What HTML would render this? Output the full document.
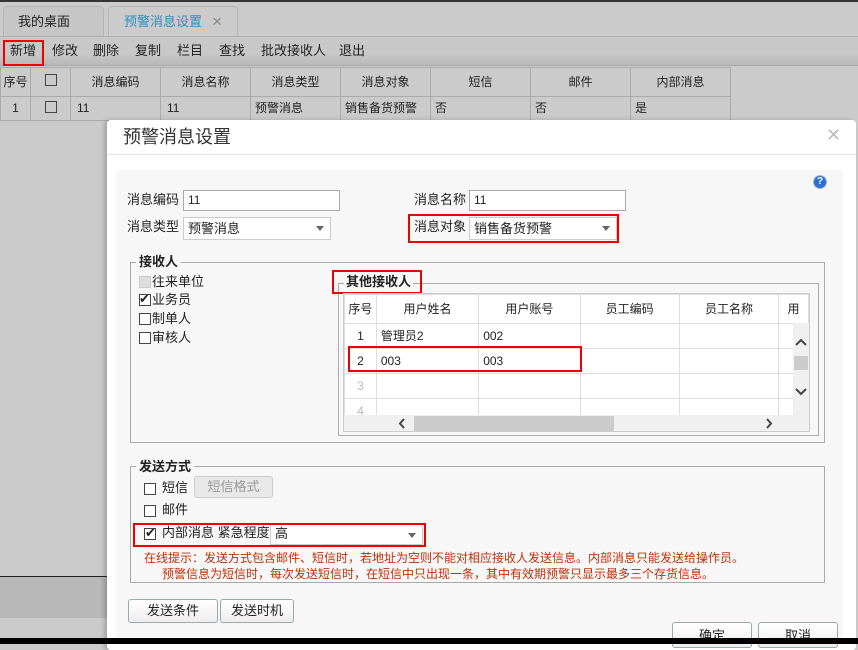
<!DOCTYPE html>
<html><head><meta charset="utf-8"><style>
*{box-sizing:border-box;margin:0;padding:0}
body{width:858px;height:644px;overflow:hidden;background:#cbcbcb;font-family:"Liberation Sans","Noto Sans CJK SC",sans-serif;font-size:12px;color:#222;position:relative;line-height:1.2}
.a{position:absolute}
.inp{position:absolute;background:#fff;border:1px solid #aaa;padding-left:4px;line-height:18px;font-size:12px}
.arr{position:absolute;right:6px;top:8px;border-left:4px solid transparent;border-right:4px solid transparent;border-top:5px solid #666}
.cb{position:absolute;width:12px;height:12px;border:1px solid #444;background:#fff}
.red{position:absolute;border:2px solid #e00}
.btn{position:absolute;border:1px solid #9aa;border-radius:3px;background:linear-gradient(#fff,#eee);text-align:center;font-size:13px}
.g td{border:1px solid #ddd;height:25px;padding-left:4px}
</style></head><body>
<div class="a" style="left:0;top:0;width:858px;height:2px;background:#333"></div>
<div class="a" style="left:3px;top:6px;width:101px;height:30px;border:1px solid #b5b5b5;border-bottom:none;border-radius:4px 4px 0 0;background:#c6c6c6;font-size:13px;line-height:30px;padding-left:14px">我的桌面</div>
<div class="a" style="left:108px;top:6px;width:130px;height:31px;border:1px solid #b5b5b5;border-bottom:none;border-radius:4px 4px 0 0;background:#cbcbcb;font-size:13px;line-height:30px;padding-left:15px;color:#2a8fc0">预警消息设置 <span style="color:#888;margin-left:6px">✕</span></div>
<div class="a" style="left:0;top:36px;width:858px;height:30px;border-top:1px solid #b0b0b0;background:linear-gradient(#c8c8c8 0,#c8c8c8 60%,#b8b8b8 100%);border-bottom:1px solid #a8a8a8"></div>
<div class="a" style="left:10px;top:43px;font-size:13px">新增</div>
<div class="a" style="left:52px;top:43px;font-size:13px">修改</div>
<div class="a" style="left:93px;top:43px;font-size:13px">删除</div>
<div class="a" style="left:135px;top:43px;font-size:13px">复制</div>
<div class="a" style="left:177px;top:43px;font-size:13px">栏目</div>
<div class="a" style="left:219px;top:43px;font-size:13px">查找</div>
<div class="a" style="left:261px;top:43px;font-size:13px">批改接收人</div>
<div class="a" style="left:339px;top:43px;font-size:13px">退出</div>
<div class="red" style="left:3px;top:40px;width:41px;height:26px"></div>
<table class="a" style="left:0;top:67px;border-collapse:collapse;font-size:12px">
<tr style="height:29px;text-align:center">
<td style="width:30px;border:1px solid #aaa">序号</td><td style="width:40px;border:1px solid #aaa"><span style="display:inline-block;width:12px;height:12px;border:1px solid #444"></span></td>
<td style="width:90px;border:1px solid #aaa">消息编码</td><td style="width:90px;border:1px solid #aaa">消息名称</td><td style="width:90px;border:1px solid #aaa">消息类型</td><td style="width:90px;border:1px solid #aaa">消息对象</td><td style="width:100px;border:1px solid #aaa">短信</td><td style="width:100px;border:1px solid #aaa">邮件</td><td style="width:100px;border:1px solid #aaa">内部消息</td></tr>
<tr style="height:24px">
<td style="border:1px solid #aaa;text-align:center">1</td><td style="border:1px solid #aaa;text-align:center"><span style="display:inline-block;width:12px;height:12px;border:1px solid #444"></span></td>
<td style="border:1px solid #aaa;padding-left:6px">11</td><td style="border:1px solid #aaa;padding-left:6px">11</td><td style="border:1px solid #aaa;padding-left:4px">预警消息</td><td style="border:1px solid #aaa;padding-left:4px">销售备货预警</td><td style="border:1px solid #aaa;padding-left:4px">否</td><td style="border:1px solid #aaa;padding-left:4px">否</td><td style="border:1px solid #aaa;padding-left:4px">是</td></tr></table>
<div class="a" style="left:0;top:576px;width:110px;height:1px;background:#222"></div>
<div class="a" style="left:0;top:577px;width:110px;height:41px;background:#b8b8b8"></div>
<div class="a" style="left:107px;top:120px;width:749px;height:530px;background:#fff;border-radius:4px;box-shadow:-3px 0 5px rgba(0,0,0,.2)"></div>
<div class="a" style="left:123px;top:127px;font-size:18px;color:#333">预警消息设置</div>
<div class="a" style="left:826px;top:125px;font-size:18px;color:#bbb">✕</div>
<div class="a" style="left:107px;top:154px;width:749px;height:1px;background:#e3e3e3"></div>
<div class="a" style="left:116px;top:170px;width:727px;height:470px;background:#f7f7f7"></div>
<div class="a" style="left:813px;top:175px;width:14px;height:14px;border-radius:50%;background:#2c6fd1;border:1px solid #9bd;color:#fff;font-size:10px;font-weight:bold;text-align:center;line-height:12px">?</div>
<div class="a" style="left:127px;top:192px;font-size:13px">消息编码</div>
<div class="inp" style="left:183px;top:190px;width:157px;height:21px">11</div>
<div class="a" style="left:414px;top:192px;font-size:13px">消息名称</div>
<div class="inp" style="left:469px;top:190px;width:157px;height:21px">11</div>
<div class="a" style="left:127px;top:219px;font-size:13px">消息类型</div>
<div class="inp" style="left:183px;top:217px;width:148px;height:23px;border-color:#ccc;line-height:21px;font-size:13px">预警消息<i class="arr"></i></div>
<div class="a" style="left:414px;top:219px;font-size:13px">消息对象</div>
<div class="inp" style="left:469px;top:217px;width:148px;height:23px;border-color:#ccc;line-height:21px;font-size:13px">销售备货预警<i class="arr"></i></div>
<div class="red" style="left:408px;top:214px;width:211px;height:29px"></div>
<div class="a" style="left:130px;top:262px;width:695px;height:181px;border:1px solid #aaa"></div>
<div class="a" style="left:136px;top:254px;background:#f7f7f7;padding:0 3px;font-weight:bold;font-size:13px">接收人</div>
<div class="cb" style="left:139px;top:276px;background:#ddd;border-color:#ccc"></div><div class="a" style="left:152px;top:274px;font-size:13px">往来单位</div>
<div class="cb" style="left:139px;top:294px"></div><div class="a" style="left:139px;top:292px;font-size:13px;line-height:14px">✔</div><div class="a" style="left:152px;top:292px;font-size:13px">业务员</div>
<div class="cb" style="left:139px;top:313px"></div><div class="a" style="left:152px;top:311px;font-size:13px">制单人</div>
<div class="cb" style="left:139px;top:332px"></div><div class="a" style="left:152px;top:330px;font-size:13px">审核人</div>
<div class="a" style="left:338px;top:283px;width:481px;height:153px;border:1px solid #aaa"></div>
<div class="a" style="left:344px;top:274px;background:#f7f7f7;padding:0 2px;font-weight:bold;font-size:13px">其他接收人</div>
<div class="red" style="left:332px;top:270px;width:90px;height:24px"></div>
<div class="a" style="left:343px;top:293px;width:467px;height:139px;background:#fff;border:1px solid #ccc;overflow:hidden">
<table class="g" style="border-collapse:collapse;font-size:12px">
<tr style="text-align:center;height:29px"><td style="width:32px;height:29px;padding:0">序号</td><td style="width:103px;padding:0">用户姓名</td><td style="width:102px;padding:0">用户账号</td><td style="width:100px;padding:0">员工编码</td><td style="width:100px;padding:0">员工名称</td><td style="width:30px;padding:0">用</td></tr>
<tr><td style="text-align:center;padding:0">1</td><td>管理员2</td><td>002</td><td></td><td></td><td></td></tr>
<tr><td style="text-align:center;padding:0">2</td><td>003</td><td>003</td><td></td><td></td><td></td></tr>
<tr><td style="text-align:center;padding:0;color:#bbb">3</td><td></td><td></td><td></td><td></td><td></td></tr>
<tr><td style="text-align:center;padding:0;color:#bbb">4</td><td></td><td></td><td></td><td></td><td></td></tr>
</table>
<div class="a" style="left:449px;top:29px;width:17px;height:93px;background:#f0f0f0"></div>
<svg class="a" style="left:451px;top:44px" width="12" height="8"><path d="M1 7L6 2L11 7" stroke="#444" stroke-width="2" fill="none"/></svg>
<div class="a" style="left:450px;top:62px;width:14px;height:14px;background:#ccc"></div>
<svg class="a" style="left:451px;top:94px" width="12" height="8"><path d="M1 1L6 6L11 1" stroke="#444" stroke-width="2" fill="none"/></svg>
<div class="a" style="left:0;top:121px;width:466px;height:17px;background:#f0f0f0"></div>
<div class="a" style="left:70px;top:122px;width:200px;height:15px;background:#ccc"></div>
<svg class="a" style="left:54px;top:124px" width="8" height="11"><path d="M6 1L2 5.5L6 10" stroke="#444" stroke-width="2" fill="none"/></svg>
<svg class="a" style="left:421px;top:124px" width="8" height="11"><path d="M2 1L6 5.5L2 10" stroke="#444" stroke-width="2" fill="none"/></svg>
</div>
<div class="red" style="left:348px;top:346px;width:234px;height:26px"></div>
<div class="a" style="left:130px;top:466px;width:695px;height:117px;border:1px solid #aaa"></div>
<div class="a" style="left:136px;top:459px;background:#f7f7f7;padding:0 3px;font-weight:bold;font-size:13px">发送方式</div>
<div class="cb" style="left:144px;top:483px"></div><div class="a" style="left:162px;top:480px;font-size:13px">短信</div>
<div class="a" style="left:194px;top:476px;width:79px;height:22px;border:1px solid #ccc;border-radius:3px;background:#e8e8e8;color:#999;text-align:center;line-height:20px;font-size:13px">短信格式</div>
<div class="cb" style="left:144px;top:505px"></div><div class="a" style="left:162px;top:502px;font-size:13px">邮件</div>
<div class="cb" style="left:144px;top:528px"></div><div class="a" style="left:145px;top:526px;font-size:13px;line-height:13px">✔</div>
<div class="a" style="left:162px;top:525px;font-size:13px">内部消息&nbsp;紧急程度</div>
<div class="inp" style="left:270px;top:524px;width:153px;height:21px;border-color:#ccc;font-size:13px">高<i class="arr"></i></div>
<div class="red" style="left:133px;top:523px;width:293px;height:24px"></div>
<div class="a" style="left:144px;top:550px;color:#c0300a;font-size:12px;line-height:16px">在线提示：发送方式包含邮件、短信时，若地址为空则不能对相应接收人发送信息。内部消息只能发送给操作员。<br><span style="padding-left:18px">预警信息为短信时，每次发送短信时，在短信中只出现一条，其中有效期预警只显示最多三个存货信息。</span></div>
<div class="btn" style="left:128px;top:599px;width:90px;height:24px;line-height:22px">发送条件</div>
<div class="btn" style="left:220px;top:599px;width:74px;height:24px;line-height:22px">发送时机</div>
<div class="btn" style="left:672px;top:622px;width:80px;height:26px;line-height:26px">确定</div>
<div class="btn" style="left:758px;top:622px;width:80px;height:26px;line-height:26px">取消</div>
<div class="a" style="left:0;top:638px;width:858px;height:6px;background:#000"></div>
</body></html>
